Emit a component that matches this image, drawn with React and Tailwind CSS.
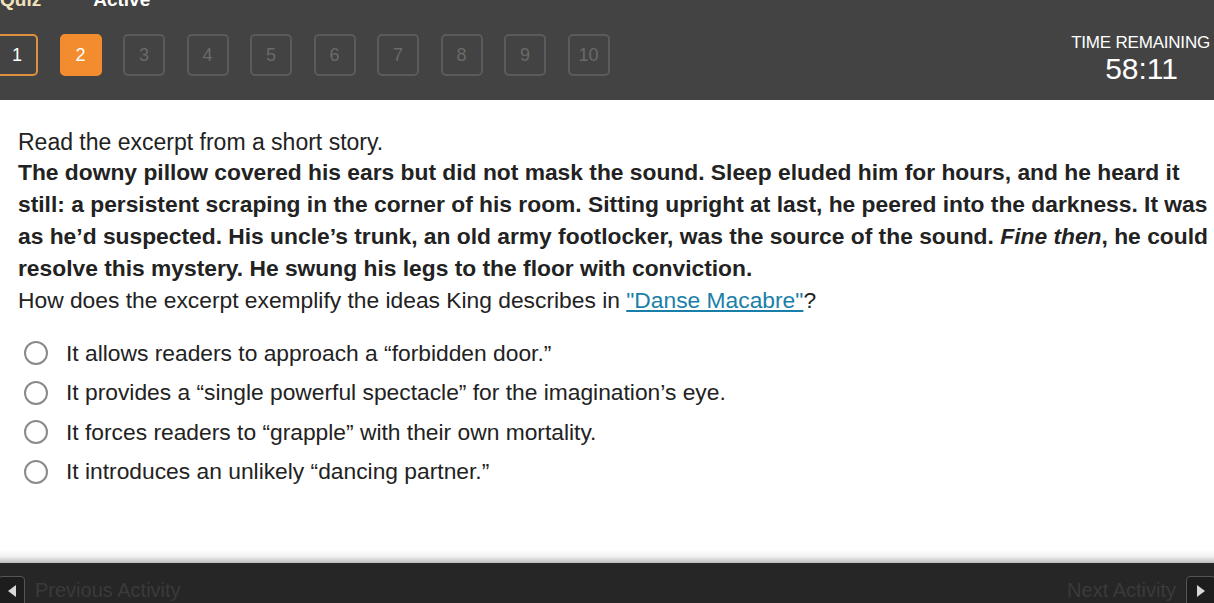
import { useState } from "react";

const questions = [1, 2, 3, 4, 5, 6, 7, 8, 9, 10];

const choices = [
  "It allows readers to approach a \u201cforbidden door.\u201d",
  "It provides a \u201csingle powerful spectacle\u201d for the imagination\u2019s eye.",
  "It forces readers to \u201cgrapple\u201d with their own mortality.",
  "It introduces an unlikely \u201cdancing partner.\u201d",
];

function QuestionBox({ n, current, answered }) {
  let cls = "border-[#5b5b5b] text-[#6a6a6a]";
  if (current) cls = "bg-[#f28c2e] border-[#f28c2e] text-white";
  else if (answered) cls = "border-[#e0903c] text-white";
  return (
    <div
      className={`w-[42px] h-[42px] shrink-0 rounded-[5px] border-2 flex items-center justify-center text-[18px] ${cls}`}
    >
      {n}
    </div>
  );
}

export default function App() {
  const [selected, setSelected] = useState(null);

  return (
    <div className="w-[1214px] h-[603px] overflow-hidden bg-white flex flex-col font-['Liberation_Sans',Arial,sans-serif]">
      <header className="h-[100px] shrink-0 bg-[#434343] overflow-hidden">
        <div className="flex items-end gap-[52px] -mt-[10px] h-[20px]">
          <span className="text-[19px] leading-[20px] font-bold text-[#f3e3bd]">Quiz</span>
          <span className="text-[19px] leading-[20px] font-bold text-white">Active</span>
        </div>
        <div className="flex items-start justify-between mt-[24px]">
          <div className="flex gap-[21.5px] -ml-[4px]">
            {questions.map((n) => (
              <QuestionBox key={n} n={n} current={n === 2} answered={n === 1} />
            ))}
          </div>
          <div className="flex flex-col items-center pr-[4px] -mt-[1px] text-white">
            <span className="text-[17px] leading-[20px] tracking-[-0.2px]">TIME REMAINING</span>
            <span className="text-[30px] leading-[32px] ml-[2px]">58:11</span>
          </div>
        </div>
      </header>

      <main className="flex-1 pl-[18px] pt-[28px] text-[#222]">
        <p className="text-[23px] leading-[28px]">Read the excerpt from a short story.</p>
        <p className="text-[22.8px] leading-[32px] font-bold whitespace-nowrap">
          The downy pillow covered his ears but did not mask the sound. Sleep eluded him for hours, and he heard it
          <br />
          still: a persistent scraping in the corner of his room. Sitting upright at last, he peered into the darkness. It was
          <br />
          as he&rsquo;d suspected. His uncle&rsquo;s trunk, an old army footlocker, was the source of the sound.{" "}
          <em>Fine then</em>, he could
          <br />
          resolve this mystery. He swung his legs to the floor with conviction.
        </p>
        <p className="text-[22.8px] leading-[32px]">
          How does the excerpt exemplify the ideas King describes in{" "}
          <a href="#" className="text-[#1a7fa8] underline underline-offset-2">
            "Danse Macabre"
          </a>
          ?
        </p>
        <ul className="mt-[22px] flex flex-col gap-[9.5px] pl-[6px]">
          {choices.map((c, i) => (
            <li
              key={i}
              className="flex items-center gap-[18px] h-[30px] cursor-pointer"
              onClick={() => setSelected(i)}
            >
              <span className="w-[24px] h-[24px] shrink-0 rounded-full border-[2px] border-[#8a8a8a] flex items-center justify-center">
                {selected === i && <span className="w-[12px] h-[12px] rounded-full bg-[#555]" />}
              </span>
              <span className="text-[22.8px]">{c}</span>
            </li>
          ))}
        </ul>
      </main>

      <div className="h-[13px] shrink-0 bg-gradient-to-b from-white via-[#f0f0f0] to-[#bdbdbd]" />
      <footer className="h-[40px] shrink-0 bg-[#262626] flex justify-between items-start pt-[13px]">
        <div className="flex items-start gap-[10px]">
          <div className="w-[27px] h-[40px] -ml-[2px] rounded-[4px] border border-[#555] bg-[#1d1d1d] flex items-center justify-center pb-[10px]">
            <svg width="8" height="12" viewBox="0 0 8 12"><path d="M8 0 L0 6 L8 12 Z" fill="#d8d8d8" /></svg>
          </div>
          <span className="text-[20px] leading-[26px] text-[#3a3a3a] mt-[1px]">Previous Activity</span>
        </div>
        <div className="flex items-start gap-[10px]">
          <span className="text-[20px] leading-[26px] text-[#3a3a3a] mt-[1px]">Next Activity</span>
          <div className="w-[30px] h-[40px] -mr-[2px] rounded-[4px] border border-[#555] bg-[#1d1d1d] flex items-center justify-center pb-[10px]">
            <svg width="8" height="12" viewBox="0 0 8 12"><path d="M0 0 L8 6 L0 12 Z" fill="#d8d8d8" /></svg>
          </div>
        </div>
      </footer>
    </div>
  );
}
